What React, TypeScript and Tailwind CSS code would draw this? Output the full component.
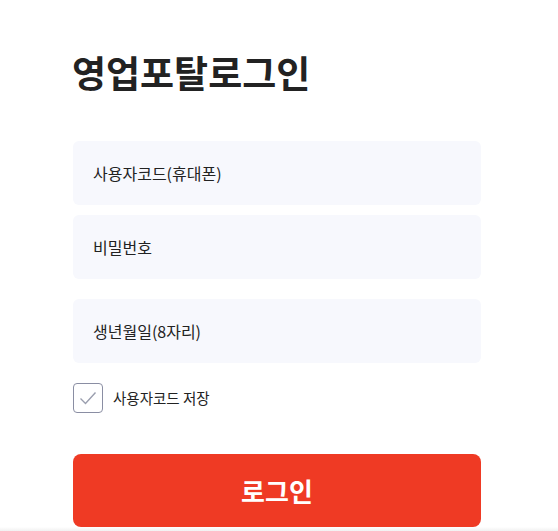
export default function App() {
  const fields = ['사용자코드(휴대폰)', '비밀번호'];
  return (
    <div
      className="w-[558px] h-[531px] bg-white overflow-hidden relative"
      style={{ fontFamily: '"Noto Sans CJK KR", "Noto Sans", sans-serif' }}
    >
      <div className="w-[408px] ml-[73px] pt-[44px] flex flex-col">
        <h1 className="text-[37px] leading-[56px] font-semibold text-[#222] -ml-[1px]">영업포탈로그인</h1>

        <div className="mt-[41px] flex flex-col gap-[10px]">
          {fields.map((f) => (
            <div key={f} className="h-[64px] rounded-[6px] bg-[#f7f8fd] flex items-center px-[20px] text-[16px] text-[#222]">
              {f}
            </div>
          ))}
        </div>
        <div className="mt-[20px] h-[64px] rounded-[6px] bg-[#f7f8fd] flex items-center px-[20px] text-[16px] text-[#222]">
          생년월일(8자리)
        </div>

        <label className="mt-[20px] flex items-center gap-[10px]">
          <span className="w-[30px] h-[30px] rounded-[4px] border border-[#8a8ea3] flex items-center justify-center">
            <svg width="18" height="14" viewBox="0 0 18 14" fill="none">
              <path d="M1.5 7.5 L6.5 12.5 L16.5 1.5" stroke="#9a9eae" strokeWidth="1.4" />
            </svg>
          </span>
          <span className="text-[14.5px] text-[#222]">사용자코드 저장</span>
        </label>

        <button className="mt-[41px] h-[73px] rounded-[8px] bg-[#ef3a24] text-white text-[26px] font-bold flex items-center justify-center">
          로그인
        </button>
      </div>
      <div className="absolute left-0 right-0 bottom-0 h-[4px] bg-gradient-to-b from-white to-[#f1f1f1]" />
    </div>
  );
}
